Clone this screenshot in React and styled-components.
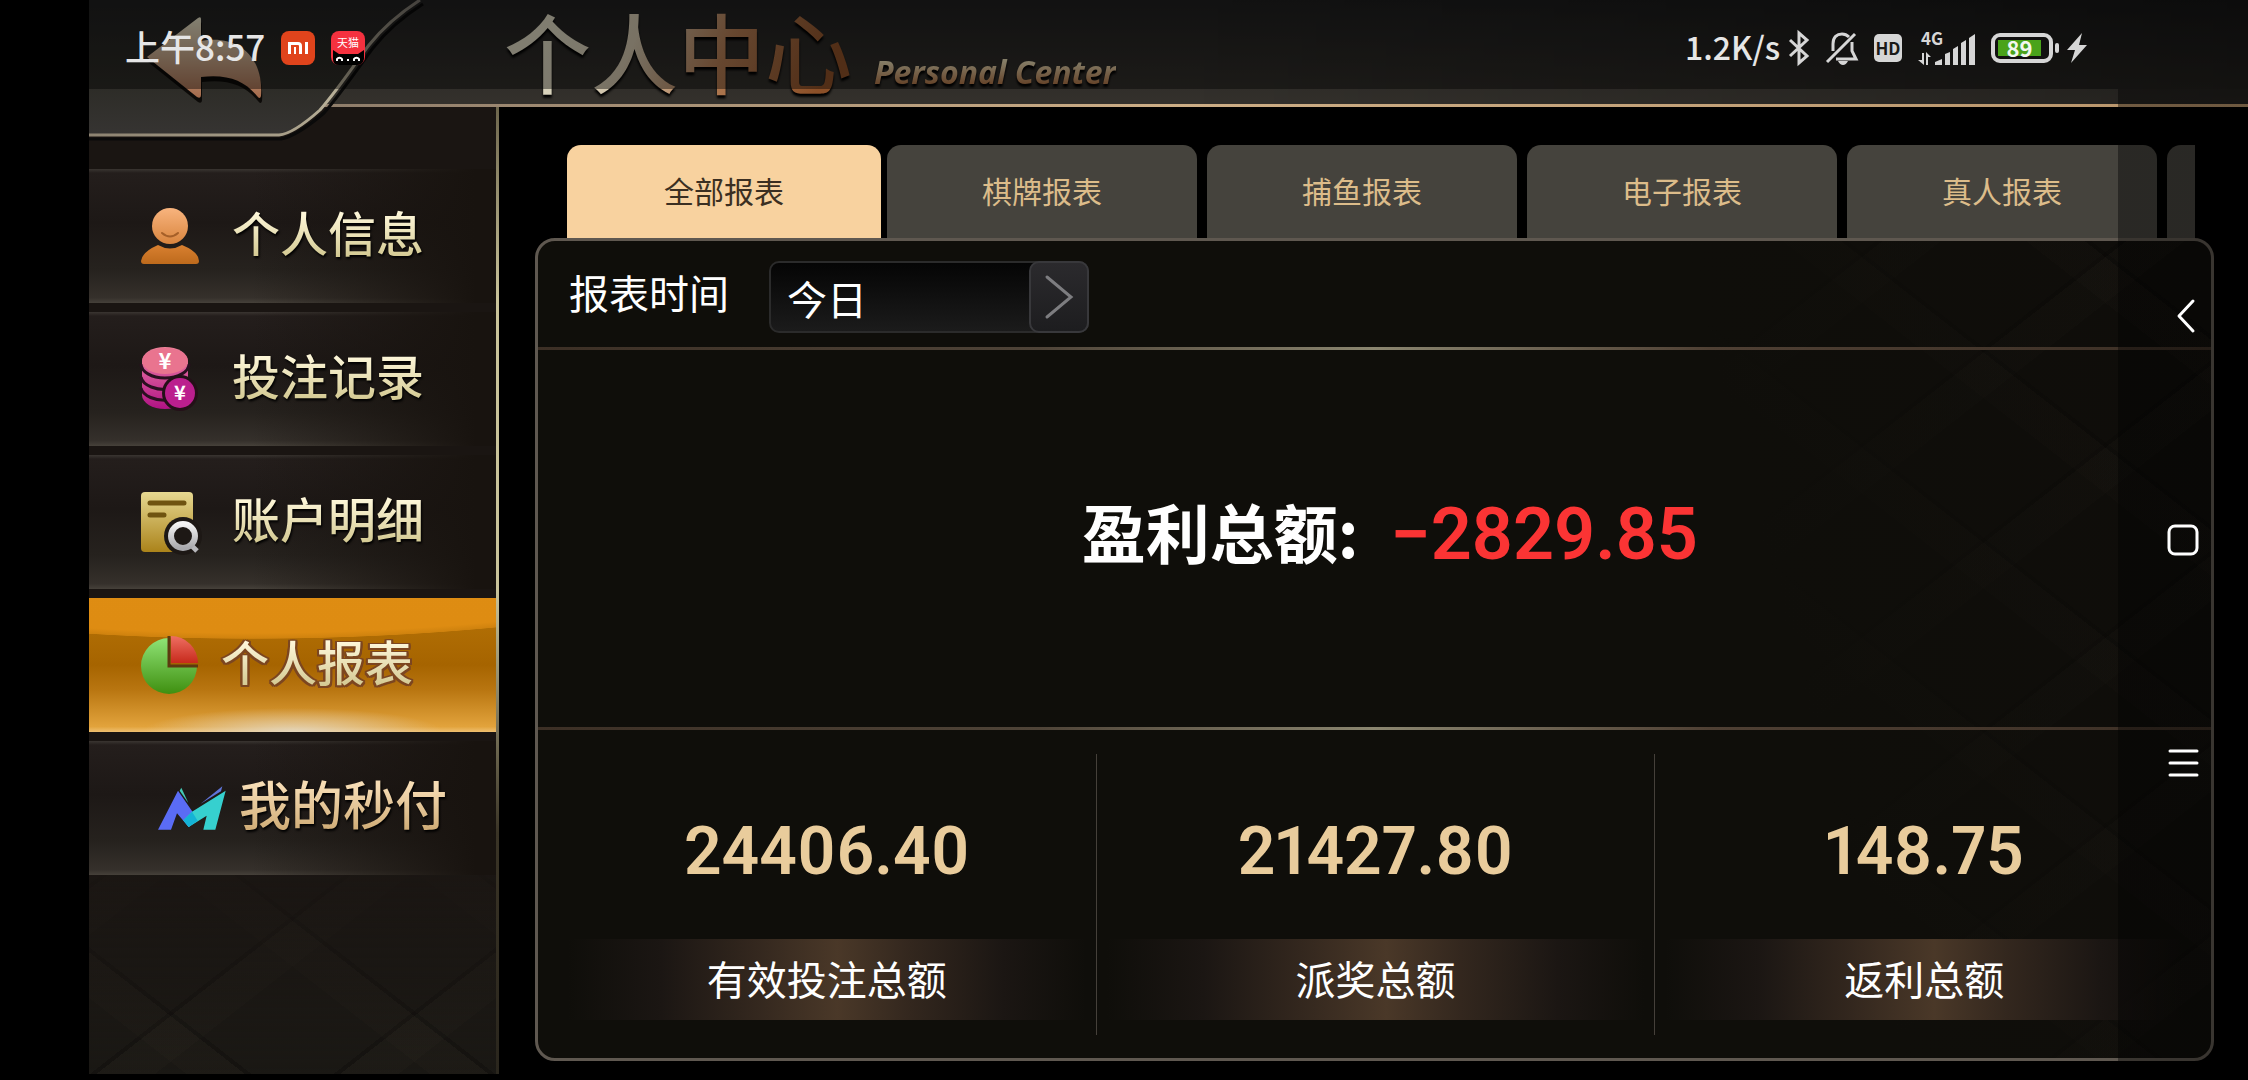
import React, { useState } from 'react';
import styled, { createGlobalStyle, css } from 'styled-components';

const menus = [
  { id: 'info', label: '个人信息', Icon: PersonIcon },
  { id: 'bets', label: '投注记录', Icon: CoinsIcon },
  { id: 'account', label: '账户明细', Icon: DetailIcon },
  { id: 'report', label: '个人报表', Icon: PieIcon },
  { id: 'pay', label: '我的秒付', Icon: PayIcon, wide: true },
];

const tabs = ['全部报表', '棋牌报表', '捕鱼报表', '电子报表', '真人报表'];

const stats = [
  { label: '有效投注总额', value: '24406.40' },
  { label: '派奖总额', value: '21427.80' },
  { label: '返利总额', value: '148.75' },
];

function App() {
  const [menu, setMenu] = useState('report');
  const [tab, setTab] = useState(tabs[0]);
  const [range, setRange] = useState('今日');

  return (
    <StyledScreen>
      <GlobalStyle />
      <StyledHeader>
        <StyledBack type="button" aria-label="返回">
          <BackPlate />
        </StyledBack>
        <StyledTitle>个人中心</StyledTitle>
        <StyledSubTitle>Personal Center</StyledSubTitle>
      </StyledHeader>

      <StyledBody>
        <StyledSidebar>
          {menus.map(({ id, label, Icon, wide }) => (
            <StyledMenu
              key={id}
              type="button"
              $active={menu === id}
              $wide={wide}
              onClick={() => setMenu(id)}
            >
              <Icon />
              <StyledMenuLabel $active={menu === id} $wide={wide}>
                {label}
              </StyledMenuLabel>
            </StyledMenu>
          ))}
        </StyledSidebar>

        <StyledMain>
          <StyledTabs role="tablist">
            {tabs.map((name) => (
              <StyledTab
                key={name}
                type="button"
                role="tab"
                aria-selected={tab === name}
                $active={tab === name}
                onClick={() => setTab(name)}
              >
                {name}
              </StyledTab>
            ))}
            <StyledTab type="button" role="tab" aria-label="更多报表" aria-selected={false} />
          </StyledTabs>

          <StyledPanel>
            <StyledFilter>
              <StyledFilterLabel htmlFor="range">报表时间</StyledFilterLabel>
              <StyledSelectBox>
                <StyledSelect
                  id="range"
                  value={range}
                  onChange={(e) => setRange(e.target.value)}
                >
                  <option>今日</option>
                  <option>昨日</option>
                  <option>本月</option>
                </StyledSelect>
                <StyledSelectArrow>
                  <svg width="28" height="44" viewBox="0 0 28 44" fill="none">
                    <path d="M2 2 26 22 2 42" stroke="#7d7d80" strokeWidth="3" strokeLinecap="round" />
                  </svg>
                </StyledSelectArrow>
              </StyledSelectBox>
            </StyledFilter>
            <StyledLine />
            <StyledProfit>
              <StyledProfitLabel>盈利总额:</StyledProfitLabel>
              <StyledProfitValue>−2829.85</StyledProfitValue>
            </StyledProfit>
            <StyledLine />
            <StyledStats>
              {stats.map((item, i) => (
                <React.Fragment key={item.label}>
                  {i > 0 && <StyledDivider />}
                  <StyledStat>
                    <StyledStatValue>{item.value}</StyledStatValue>
                    <StyledStatLabel>{item.label}</StyledStatLabel>
                  </StyledStat>
                </React.Fragment>
              ))}
            </StyledStats>
          </StyledPanel>
        </StyledMain>
      </StyledBody>

      <StatusBar />
      <SystemNav />
    </StyledScreen>
  );
}

function StatusBar() {
  return (
    <StyledStatus>
      <StyledGroup $gap="16px">
        <StyledStatusText $size="35px">上午8:57</StyledStatusText>
        <MiIcon />
        <TmallIcon />
      </StyledGroup>
      <StyledGroup $gap="16px">
        <StyledGroup $gap="8px">
          <StyledStatusText $size="32px">1.2K/s</StyledStatusText>
          <svg width="22" height="34" viewBox="0 0 22 34" fill="none" stroke="#d6d6d6" strokeWidth="3">
            <path d="M2 9 19 25 11 32V2L19 9 2 25" />
          </svg>
        </StyledGroup>
        <svg width="32" height="34" viewBox="0 0 32 34" fill="none" stroke="#d6d6d6" strokeWidth="3">
          <path d="M7 20V13C7 6 11 3 16 3 19 3 21 4 23 6" />
          <path d="M26 11V20L30 28H10" />
          <path d="M1 31 29 3" />
          <path d="M12 30H22Q20 34 17 34 14 34 12 30Z" fill="#d6d6d6" stroke="none" />
        </svg>
        <StyledHd>HD</StyledHd>
        <SignalIcon />
        <StyledGroup $gap="8px">
          <StyledBattery>
            <StyledCharge>89</StyledCharge>
          </StyledBattery>
          <svg width="20" height="30" viewBox="0 0 20 30" fill="#d6d6d6">
            <path d="M15 0 0 17H8L4 30 20 12H12Z" />
          </svg>
        </StyledGroup>
      </StyledGroup>
    </StyledStatus>
  );
}

function SystemNav() {
  return (
    <StyledSystemNav>
      <StyledNavButton type="button" aria-label="后退">
        <svg width="32" height="34" viewBox="0 0 32 34" fill="none" stroke="#fff" strokeWidth="3" strokeLinecap="round" strokeLinejoin="round">
          <path d="M26 2 12 17 26 32" />
        </svg>
      </StyledNavButton>
      <StyledNavButton type="button" aria-label="主页">
        <svg width="32" height="32" viewBox="0 0 32 32" fill="none" stroke="#fff" strokeWidth="3">
          <rect x="2" y="2" width="28" height="28" rx="6" />
        </svg>
      </StyledNavButton>
      <StyledNavButton type="button" aria-label="最近任务">
        <svg width="32" height="32" viewBox="0 0 32 32" stroke="#fff" strokeWidth="3" strokeLinecap="round">
          <path d="M3 3H30M3 15H30M3 27H30" />
        </svg>
      </StyledNavButton>
    </StyledSystemNav>
  );
}

function BackPlate() {
  return (
    <svg width="334" height="142" viewBox="0 0 334 142" fill="none">
      <defs>
        <linearGradient id="plate" x1="0" y1="0" x2="0" y2="1">
          <stop offset="0" stopColor="#1f1f1f" />
          <stop offset="0.6" stopColor="#2c2b26" />
          <stop offset="1" stopColor="#363432" />
        </linearGradient>
        <linearGradient id="plateEdge" x1="0" y1="1" x2="1" y2="0">
          <stop offset="0" stopColor="#8d8371" />
          <stop offset="0.5" stopColor="#b9b199" />
          <stop offset="1" stopColor="#77726a" />
        </linearGradient>
        <linearGradient id="arrow" x1="0" y1="0" x2="0" y2="1">
          <stop offset="0" stopColor="#e2dec4" />
          <stop offset="1" stopColor="#a4694a" />
        </linearGradient>
      </defs>
      <path d="M0 0H331Q300 20 280 45C270 58 250 88 231 110Q204 134 190 135H0Z" fill="url(#plate)" />
      <path d="M0 139H192Q208 136 235 113C254 91 274 61 284 48Q304 23 334 4" stroke="#0a0a0a" strokeWidth="3" />
      <path d="M0 135H190Q204 134 231 110C250 88 270 58 280 45Q300 20 331 0" stroke="url(#plateEdge)" strokeWidth="3" />
      <path d="M58 59 109 20Q112 18 112 21V43C150 36 175 60 172 98Q171 102 168 98C155 82 138 76 112 79V97Q112 101 108 99Z" fill="#0c0a08" transform="translate(1 3)" />
      <path d="M58 57 109 18Q112 16 112 19V41C150 34 175 58 172 96Q171 100 168 96C155 80 138 74 112 77V95Q112 99 108 97Z" fill="url(#arrow)" />
    </svg>
  );
}

function MiIcon() {
  return (
    <svg width="34" height="34" viewBox="0 0 34 34">
      <rect width="34" height="34" rx="8" fill="#e0441c" />
      <path d="M7 23V11H17Q21 11 21 15V23H18V15Q18 14 17 14H10V23ZM13 16H15V23H13ZM24 11H27V23H24Z" fill="#fff" />
    </svg>
  );
}

function TmallIcon() {
  return (
    <svg width="34" height="34" viewBox="0 0 34 34">
      <rect width="34" height="34" rx="8" fill="#f5313f" />
      <path d="M2 19 8 23H27L33 19V28Q32 34 26 34H8Q2 34 2 28Z" fill="#000" />
      <text x="17" y="16" fontSize="11" fontWeight="400" textAnchor="middle" fill="#fff">天猫</text>
      <path d="M6 30V28A3 3 0 0 1 11 28V30M23 30V28A3 3 0 0 1 28 28V30M16 29H18" fill="none" stroke="#fff" strokeWidth="2" />
    </svg>
  );
}

function SignalIcon() {
  return (
    <svg width="57" height="34" viewBox="0 0 57 34" fill="#d6d6d6">
      <text x="3" y="14" fontSize="17" fontWeight="700">4G</text>
      <path d="M4 22H6V34L0 29H4ZM8 34V21L13 26H10V34Z" />
      <path d="M17 34V31L24 28V34ZM27 34V23L32 21V34ZM35 34V18L40 15V34ZM43 34V12L48 9V34ZM51 34V7L57 3V34Z" />
    </svg>
  );
}

function PersonIcon() {
  return (
    <svg width="58" height="58" viewBox="0 0 58 58">
      <defs>
        <linearGradient id="head" x1="0" y1="0" x2="0" y2="1">
          <stop offset="0" stopColor="#f8b47e" />
          <stop offset="1" stopColor="#d9853e" />
        </linearGradient>
        <linearGradient id="torso" x1="0" y1="0" x2="0" y2="1">
          <stop offset="0" stopColor="#d98030" />
          <stop offset="1" stopColor="#bd6a1c" />
        </linearGradient>
      </defs>
      <circle cx="29" cy="19" r="18" fill="url(#head)" />
      <path d="M21 26Q29 33 37 26" fill="none" stroke="#a55f28" strokeWidth="2" strokeLinecap="round" />
      <path d="M17 38Q29 45 41 38Q58 45 58 54Q58 57 55 57H3Q0 57 0 54Q1 45 17 38Z" fill="url(#torso)" />
    </svg>
  );
}

function CoinsIcon() {
  return (
    <svg width="58" height="64" viewBox="0 0 58 64">
      <defs>
        <linearGradient id="coins" x1="0" y1="0" x2="0" y2="1">
          <stop offset="0" stopColor="#ec8298" />
          <stop offset="0.4" stopColor="#d8589a" />
          <stop offset="1" stopColor="#b01284" />
        </linearGradient>
      </defs>
      <path d="M1 14A23 14 0 0 1 47 14V48A23 14 0 0 1 1 48Z" fill="url(#coins)" />
      <path d="M0 17A24 14 0 0 0 48 17M0 30A24 14 0 0 0 30 42M0 41A24 14 0 0 0 28 53" fill="none" stroke="#2a1020" strokeWidth="3" />
      <ellipse cx="24" cy="14" rx="23" ry="13" fill="#e9748f" />
      <circle cx="39" cy="46" r="18" fill="#241018" />
      <circle cx="39" cy="46" r="15" fill="#bb1f8e" />
      <text x="24" y="22" fontSize="22" fontWeight="700" textAnchor="middle" fill="#fff">¥</text>
      <text x="39" y="53" fontSize="20" fontWeight="700" textAnchor="middle" fill="#fff">¥</text>
    </svg>
  );
}

function DetailIcon() {
  return (
    <svg width="58" height="62" viewBox="0 0 58 62">
      <defs>
        <linearGradient id="sheet" x1="0" y1="0" x2="0" y2="1">
          <stop offset="0" stopColor="#e6d891" />
          <stop offset="1" stopColor="#ab831a" />
        </linearGradient>
        <linearGradient id="lens" x1="0" y1="0" x2="0" y2="1">
          <stop offset="0" stopColor="#f4f4f4" />
          <stop offset="1" stopColor="#a9a9ad" />
        </linearGradient>
      </defs>
      <rect y="1" width="52" height="60" rx="4" fill="url(#sheet)" />
      <path d="M9 12H43M9 24H23" stroke="#6f5310" strokeWidth="5" strokeLinecap="round" />
      <circle cx="42" cy="45" r="19" fill="#1d1815" />
      <path d="M50 54 56 60" stroke="#b8b8bc" strokeWidth="5" />
      <circle cx="42" cy="45" r="12" fill="#1d1815" stroke="url(#lens)" strokeWidth="6" />
    </svg>
  );
}

function PieIcon() {
  return (
    <svg width="58" height="60" viewBox="0 0 58 60">
      <defs>
        <linearGradient id="pieGreen" x1="0" y1="0" x2="0" y2="1">
          <stop offset="0" stopColor="#8fe375" />
          <stop offset="1" stopColor="#3f8f10" />
        </linearGradient>
        <linearGradient id="pieRed" x1="0" y1="0" x2="0" y2="1">
          <stop offset="0" stopColor="#ee6f62" />
          <stop offset="1" stopColor="#c72a1c" />
        </linearGradient>
      </defs>
      <path d="M28 3A28 28 0 1 0 56 31H28Z" fill="url(#pieGreen)" />
      <path d="M28 1V31H57" fill="none" stroke="#5c3a10" strokeWidth="3" />
      <path d="M30 1A27 27 0 0 1 57 28H30Z" fill="url(#pieRed)" />
    </svg>
  );
}

function PayIcon() {
  return (
    <svg width="68" height="44" viewBox="0 0 204 132">
      <path d="M0 131 60 14 102 75 117 103 92 123 57 82 39 131Z" fill="#5a6cf5" />
      <path d="M102 77 203 14 172 131H136L146 89 92 123 76 103Z" fill="#36d0cf" />
      <path d="M92 123 76 103 102 77 119 104Z" fill="#14b3d6" />
      <path d="M70 5 91 51 65 14Z" fill="#43c9b4" />
      <path d="M193 1 189 16 128 53Z" fill="#5f74d8" />
    </svg>
  );
}

const GlobalStyle = createGlobalStyle`
  * {
    box-sizing: border-box;
  }
  body {
    margin: 0;
    background: #000;
  }
  body, button, select {
    font-family: 'Noto Sans CJK SC', 'Noto Sans', sans-serif;
  }
  button {
    padding: 0;
    border: 0;
    background: none;
    cursor: pointer;
  }
  svg {
    display: block;
    flex: none;
    overflow: visible;
  }
`;

const lattice = css`
  repeating-linear-gradient(38deg, transparent 0 60px, rgba(80, 68, 56, 0.05) 60px 96px, rgba(0, 0, 0, 0.2) 96px 100px, transparent 100px 150px),
  repeating-linear-gradient(-38deg, transparent 0 60px, rgba(80, 74, 60, 0.05) 60px 96px, rgba(0, 0, 0, 0.2) 96px 100px, transparent 100px 150px)
`;

const StyledScreen = styled.div`
  position: relative;
  display: flex;
  flex-direction: column;
  min-height: 100vh;
  padding: 0 0 6px 89px;
  background: #000;
`;

const StyledHeader = styled.header`
  position: relative;
  z-index: 1;
  display: flex;
  align-items: flex-start;
  height: 107px;
  padding-left: 415px;
  background: linear-gradient(90deg, transparent 50%, rgba(0, 0, 0, 0.3)),
    linear-gradient(#1f1f1f, #34312c);
  border-bottom: 3px solid;
  border-image: linear-gradient(90deg, #8d7c6a 10%, #cdae86 50%, #b8946a) 1;
`;

const StyledBack = styled.button`
  position: absolute;
  top: 0;
  left: 0;
`;

const StyledTitle = styled.h1`
  margin: 0;
  font-size: 87px;
  line-height: 100px;
  font-weight: 500;
  color: transparent;
  background: linear-gradient(115deg, #dcd8c2 15%, #d0c4ac 38%, #b07a52 62%, #8c5028 90%);
  background-clip: text;
  filter: drop-shadow(0 3px 1px #000);
`;

const StyledSubTitle = styled.span`
  margin: 50px 0 0 22px;
  font-family: 'Open Sans', 'Noto Sans', sans-serif;
  font-size: 32px;
  line-height: 44px;
  font-weight: 700;
  font-style: italic;
  color: transparent;
  background: linear-gradient(#e6dab4 25%, #a8683a 85%);
  background-clip: text;
  filter: drop-shadow(0 3px 1px #000);
`;

const StyledBody = styled.div`
  display: flex;
  flex: 1;
`;

const StyledSidebar = styled.nav`
  display: flex;
  flex: none;
  flex-direction: column;
  gap: 9px;
  width: 410px;
  padding-top: 62px;
  background: linear-gradient(#1a1512 75%, transparent), ${lattice}, #1a1814;
  border-right: 3px solid;
  border-image: linear-gradient(#6d654c, #c9c39a 20%, #c9c39a 50%, #3a3426 75%, #2a261d) 1;
`;

const StyledMenu = styled.button`
  display: flex;
  align-items: center;
  gap: ${(props) => (props.$wide ? 13 : props.$active ? 22 : 33)}px;
  height: 134px;
  padding-left: ${(props) => (props.$wide ? 69 : 52)}px;
  background: ${(props) =>
    props.$active
      ? `radial-gradient(ellipse 150px 24px at 50% 100%, rgba(226, 216, 196, 0.9), transparent),
         radial-gradient(ellipse 900px 300px at 40% -259px, #e08f14 0, #de8c12 98%, #cf820e 99.8%, transparent 100%),
         linear-gradient(#b87508, #a66400 50%, #b87510 68%, #e2a33c 96%, #efc070)`
      : `linear-gradient(90deg, transparent 40%, #18130f 95%),
         linear-gradient(#3a3531 0, #241e1c 4px, #1d1816 40%, #26221e 75%, #35302b 96%, #46413a)`};
`;

const StyledMenuLabel = styled.span`
  padding-bottom: 10px;
  font-size: ${(props) => (props.$wide ? 52 : 48)}px;
  line-height: 64px;
  font-weight: 500;
  color: transparent;
  background: ${(props) =>
    props.$wide
      ? 'linear-gradient(#f6dcb4 20%, #c9a46c 90%)'
      : 'linear-gradient(#fdf6d8 20%, #cfc48a 85%)'};
  background-clip: text;
  filter: ${(props) =>
    props.$active
      ? 'drop-shadow(2px 0 0 #7c4620) drop-shadow(-2px 0 0 #7c4620) drop-shadow(0 2px 0 #7c4620) drop-shadow(0 -1px 0 #7c4620)'
      : 'drop-shadow(1px 2px 1px #000)'};
`;

const StyledMain = styled.main`
  display: flex;
  flex: 1;
  flex-direction: column;
  min-width: 0;
  padding: 38px 34px 13px 36px;
`;

const StyledTabs = styled.div`
  display: flex;
  gap: 10px;
  margin: 0 19px 0 32px;
  overflow: hidden;
`;

const StyledTab = styled.button`
  flex: none;
  width: ${(props) => (props.$active ? 314 : 310)}px;
  height: 93px;
  margin-right: ${(props) => (props.$active ? -4 : 0)}px;
  padding-bottom: 4px;
  border-radius: 14px 14px 0 0;
  font-size: 30px;
  color: ${(props) => (props.$active ? '#3b2f22' : '#dcbc8a')};
  background: ${(props) => (props.$active ? '#f8d29f' : '#45433d')};
`;

const StyledPanel = styled.section`
  display: flex;
  flex: 1;
  flex-direction: column;
  border: 3px solid #5f5850;
  border-radius: 20px;
  background: linear-gradient(75deg, #0f0e0a 72%, transparent 100%), ${lattice}, #0f0d0a;
`;

const StyledFilter = styled.div`
  display: flex;
  align-items: center;
  gap: 40px;
  height: 106px;
  padding-left: 31px;
  color: #fff;
`;

const StyledFilterLabel = styled.label`
  padding-bottom: 4px;
  font-size: 40px;
  line-height: 60px;
`;

const StyledSelectBox = styled.div`
  position: relative;
  width: 320px;
  height: 72px;
  margin-top: 6px;
`;

const StyledSelect = styled.select`
  width: 100%;
  height: 100%;
  padding: 2px 70px 0 16px;
  appearance: none;
  border: 2px solid #2b2b2b;
  border-radius: 10px;
  font-size: 40px;
  color: #fff;
  background: linear-gradient(#050505, #1b1b1b);
`;

const StyledSelectArrow = styled.span`
  position: absolute;
  top: 0;
  right: 0;
  display: flex;
  align-items: center;
  justify-content: center;
  width: 60px;
  height: 100%;
  border: 2px solid #38383b;
  border-radius: 10px;
  background: linear-gradient(#2b2a2d, #1d1d1f);
  pointer-events: none;
`;

const StyledLine = styled.div`
  height: 3px;
  background: linear-gradient(90deg, #3c2f25, #4f4438 30%, #8b8670 50%, #4f4034 70%, #3c2f25);
`;

const StyledProfit = styled.div`
  display: grid;
  flex: 1;
  grid-template-columns: 1fr 1fr;
  align-items: center;
  gap: 32px;
  padding-bottom: 8px;
  line-height: 96px;
`;

const StyledProfitLabel = styled.span`
  padding-bottom: 10px;
  font-size: 64px;
  font-weight: 700;
  text-align: right;
  color: #fff;
`;

const StyledProfitValue = styled.span`
  font-family: Roboto, 'Noto Sans', sans-serif;
  font-size: 72px;
  font-weight: 600;
  color: #fb3434;
`;

const StyledStats = styled.div`
  display: grid;
  grid-template-columns: 27fr 1px 28fr 1px 27fr;
  height: 328px;
  padding: 24px 18px 23px 20px;
`;

const StyledDivider = styled.div`
  background: #45403a;
`;

const StyledStat = styled.div`
  display: flex;
  flex-direction: column;
  gap: 47px;
  padding: 58px 10px 0;
  text-align: center;
`;

const StyledStatValue = styled.strong`
  font-family: Roboto, 'Noto Sans', sans-serif;
  font-size: 66px;
  font-variant-numeric: proportional-nums;
  line-height: 80px;
  font-weight: 600;
  color: #e9cc9c;
`;

const StyledStatLabel = styled.span`
  padding-bottom: 3px;
  font-size: 40px;
  line-height: 78px;
  color: #fff;
  background: linear-gradient(90deg, transparent, #1b1613 18%, #33271e 36%, #4a3828 52%, #33271e 66%, #1b1613 84%, transparent);
`;

const StyledStatus = styled.div`
  position: absolute;
  top: 0;
  right: 0;
  left: 89px;
  z-index: 2;
  display: flex;
  align-items: center;
  justify-content: space-between;
  height: 89px;
  padding: 6px 161px 0 36px;
  background: rgba(0, 0, 0, 0.42);
`;

const StyledGroup = styled.div`
  display: flex;
  align-items: center;
  gap: ${(props) => props.$gap};
`;

const StyledStatusText = styled.span`
  padding-bottom: 4px;
  font-size: ${(props) => props.$size};
  line-height: 48px;
  font-weight: 500;
  color: #e6e6e6;
`;

const StyledHd = styled.span`
  width: 28px;
  height: 28px;
  border-radius: 5px;
  font-size: 17px;
  line-height: 28px;
  font-weight: 700;
  text-align: center;
  color: #1a1917;
  background: #d6d6d6;
`;

const StyledBattery = styled.div`
  position: relative;
  width: 62px;
  height: 30px;
  margin-right: 6px;
  padding: 3px;
  border: 4px solid #d6d6d6;
  border-radius: 9px;

  &::after {
    content: '';
    position: absolute;
    top: 6px;
    right: -10px;
    width: 4px;
    height: 10px;
    border-radius: 2px;
    background: #d6d6d6;
  }
`;

const StyledCharge = styled.div`
  width: 43px;
  height: 16px;
  font-size: 22px;
  line-height: 14px;
  font-weight: 700;
  text-align: center;
  color: #f2f7ee;
  background: #4aa31a;
`;

const StyledSystemNav = styled.nav`
  position: absolute;
  top: 0;
  right: 0;
  bottom: 0;
  z-index: 3;
  display: flex;
  flex-direction: column;
  align-items: center;
  justify-content: center;
  gap: 160px;
  width: 130px;
  background: linear-gradient(transparent 89px, rgba(0, 0, 0, 0.4) 89px);
`;

const StyledNavButton = styled.button`
  display: flex;
  align-items: center;
  justify-content: center;
  width: 64px;
  height: 64px;
`;

export default App;
